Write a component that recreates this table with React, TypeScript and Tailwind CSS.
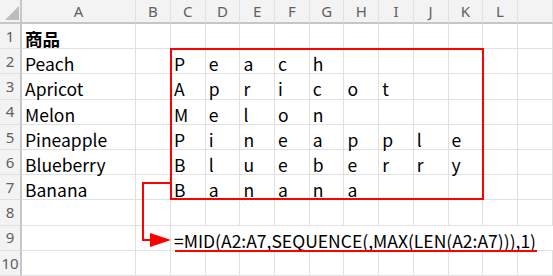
const COLS = ["A", "B", "C", "D", "E", "F", "G", "H", "I", "J", "K", "L", ""];
const FRUITS = ["Peach", "Apricot", "Melon", "Pineapple", "Blueberry", "Banana"];
const FORMULA = "=MID(A2:A7,SEQUENCE(,MAX(LEN(A2:A7))),1)";

const font = { fontFamily: '"Noto Sans CJK JP", "Noto Sans", sans-serif' };

const Cell = ({ children, bold }: { children?: React.ReactNode; bold?: boolean }) => (
  <div
    className={`border-r border-b border-[#e1e1e1] pl-[3px] pt-[2px] text-[17.5px] leading-[25px] text-black whitespace-nowrap overflow-visible ${bold ? "font-bold" : ""}`}
  >
    {children}
  </div>
);

const RowHead = ({ n }: { n: number }) => (
  <div className="bg-[#f3f3f3] border-r-2 border-r-[#c6c6c6] border-b border-b-[#e1e1e1] flex items-center justify-center text-[15px] text-[#5f5f5f] font-['Noto_Sans']">
    {n}
  </div>
);

export default function App() {
  const rows: React.ReactNode[] = [];

  for (let r = 1; r <= 10; r++) {
    rows.push(<RowHead key={`h${r}`} n={r} />);
    if (r === 9) {
      rows.push(<Cell key="9a" />);
      rows.push(<Cell key="9b" />);
      rows.push(
        <div key="9c" className="col-span-11 border-b border-[#e1e1e1] pl-[3px] pt-[2px] text-[17.5px] leading-[25px] text-black whitespace-nowrap">
          {FORMULA}
        </div>
      );
      continue;
    }
    const fruit = r === 1 ? "商品" : FRUITS[r - 2];
    rows.push(<Cell key={`${r}a`} bold={r === 1}>{fruit}</Cell>);
    rows.push(<Cell key={`${r}b`} />);
    for (let c = 0; c < 11; c++) {
      const ch = r >= 2 && r <= 7 && fruit ? fruit[c] : undefined;
      rows.push(<Cell key={`${r}-${c}`}>{ch}</Cell>);
    }
  }

  return (
    <div className="relative w-[553px] h-[276px] overflow-hidden bg-white" style={font}>
      <div className="grid grid-cols-[22px_114px_35px_repeat(10,34.7px)_1fr] grid-rows-[24px_repeat(10,25.2px)]">
        {/* corner */}
        <div className="relative bg-[#f3f3f3] border-r-2 border-r-[#c6c6c6] border-b-2 border-b-[#c6c6c6]">
          <svg className="absolute left-0 top-0" width="22" height="24">
            <polygon points="19,6 19,20 5,20" fill="#bcbcbc" />
          </svg>
        </div>
        {COLS.map((c, i) => (
          <div
            key={i}
            className="bg-[#f3f3f3] border-r border-r-[#e1e1e1] border-b-2 border-b-[#c6c6c6] flex items-center justify-center text-[15px] text-[#5f5f5f] font-['Noto_Sans']"
          >
            {c}
          </div>
        ))}
        {rows}
      </div>

      {/* selection outline */}
      <div className="absolute left-[170px] top-[48px] w-[314px] h-[152px] border-2 border-[#ff0000]" />
      {/* formula underline */}
      <div className="absolute left-[175px] top-[250px] w-[362px] h-[2px] bg-[#ff0000]" />
      {/* connector arrow */}
      <svg className="absolute left-0 top-0" width="553" height="276">
        <path d="M171 183 H143 V240 H154" fill="none" stroke="#ff0000" strokeWidth="2" />
        <polygon points="150,233 171,240 150,247" fill="#ff0000" />
      </svg>
    </div>
  );
}
